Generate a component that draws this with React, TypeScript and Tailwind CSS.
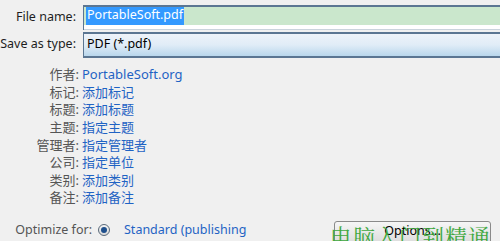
import React from "react";

const rows: [string, string][] = [
  ["作者:", "PortableSoft.org"],
  ["标记:", "添加标记"],
  ["标题:", "添加标题"],
  ["主题:", "指定主题"],
  ["管理者:", "指定管理者"],
  ["公司:", "指定单位"],
  ["类别:", "添加类别"],
  ["备注:", "添加备注"],
];

export default function App() {
  const font = { fontFamily: '"Noto Sans", "Noto Sans CJK SC", sans-serif' };
  return (
    <div
      className="w-[500px] h-[241px] bg-[#f0f0f0] overflow-hidden relative text-[12.5px] leading-none whitespace-nowrap"
      style={font}
    >
      <div className="flex items-center h-[30px] pt-[4px]">
        <div className="w-[78px] text-right pr-[2px] text-[#1e1e1e]">File name:</div>
        <div className="ml-[5px] flex-1 h-[25px] border-t-2 border-l border-[#5b7692] flex flex-col">
          <div className="h-[18px] bg-[#cae7cc] flex items-center pl-[2px]">
            <span className="bg-[#3399ff] text-white h-[18px] flex items-center px-[1px]">PortableSoft.pdf</span>
          </div>
          <div className="flex-1 bg-white border-b border-[#c9d3dc]" />
        </div>
      </div>
      <div className="flex items-center h-[27px] mt-[1px]">
        <div className="w-[78px] text-right pr-[2px] text-[#1e1e1e]">Save as type:</div>
        <div className="ml-[5px] flex-1 h-[26px] border-t-2 border-b-2 border-l border-[#5b7692] bg-gradient-to-b from-[#eef3f9] via-[#e0ecf7] to-[#b9d7ec] flex items-center pl-[3px] text-black">
          PDF (*.pdf)
        </div>
      </div>
      <div className="flex flex-col mt-[8px]">
        {rows.map(([l, v]) => (
          <div key={l} className="flex items-center h-[17.6px] text-[13px]">
            <div className="w-[81px] text-right text-[#555555] pr-[2px]">{l}</div>
            <div className="text-[#1f63c4] pl-[1px]">{v}</div>
          </div>
        ))}
      </div>
      <div className="flex items-center mt-[11px]">
        <div className="w-[94px] text-right text-[#555555] pr-[2px]">Optimize for:</div>
        <div className="ml-[4px] w-[12px] h-[12px] rounded-full border border-[#5a6a7a] bg-gradient-to-b from-[#f4f4f4] to-[#d8d8d8] flex items-center justify-center">
          <div className="w-[6px] h-[6px] rounded-full bg-[#1e4f8c]" />
        </div>
        <div className="ml-[14px] text-[#1f63c4]">Standard (publishing</div>
        <div className="ml-auto mr-[9px] mt-[3px] w-[157px] h-[22px] border border-[#8a8a8a] rounded-t-[3px] bg-gradient-to-b from-[#f6f6f6] to-[#dddddd] flex justify-center pt-[3px] text-black">
          Options...
        </div>
      </div>
      <div
        className="absolute left-[330px] top-[225px] text-[22px] leading-none text-[#3fa83f] tracking-[1px] whitespace-nowrap"
        style={{ fontFamily: '"Noto Serif CJK SC", "Noto Sans CJK SC", serif' }}
      >
        电脑入门到精通
      </div>
    </div>
  );
}
